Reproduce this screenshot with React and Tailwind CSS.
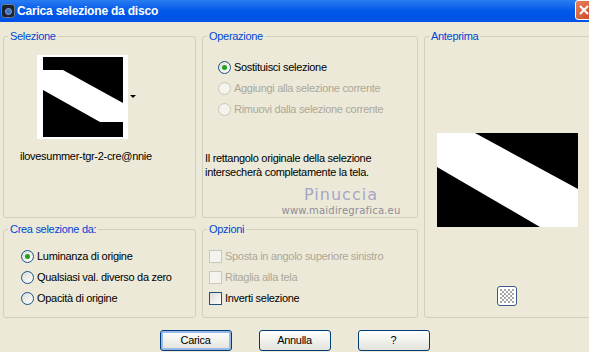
import React from "react";

const font = { fontFamily: '"Liberation Sans", Arial, sans-serif' };

function Radio({ checked, disabled, label }) {
  return (
    <div className="flex items-center h-[21px]">
      <span
        className={
          "w-[13px] h-[13px] rounded-full border flex items-center justify-center mr-[3px] " +
          (disabled
            ? "border-[#cac8bb] bg-[#f4f3ee]"
            : "border-[#1c5180] bg-gradient-to-br from-[#dcdcd7] to-white")
        }
      >
        {checked && <span className="w-[5px] h-[5px] rounded-full bg-[#21a121]" />}
      </span>
      <span className={disabled ? "text-[#aca899]" : "text-black"}>{label}</span>
    </div>
  );
}

function Check({ disabled, label }) {
  return (
    <div className="flex items-center h-[21px]">
      <span
        className={
          "w-[13px] h-[13px] border mr-[3px] " +
          (disabled
            ? "border-[#cac8bb] bg-[#f4f3ee]"
            : "border-[#1c5180] bg-gradient-to-br from-[#dcdcd7] to-white")
        }
      />
      <span className={disabled ? "text-[#aca899]" : "text-black"}>{label}</span>
    </div>
  );
}

function Group({ title, className, children }) {
  return (
    <fieldset className={"border border-[#d0d0bf] rounded-[3px] min-w-0 " + className}>
      <legend className="ml-[4px] px-[2px] text-[#0046d5] leading-[13px]">{title}</legend>
      {children}
    </fieldset>
  );
}

function Button({ children, primary }) {
  return (
    <button
      className={
        "w-[72px] h-[21px] rounded-[3px] border border-[#003c74] bg-gradient-to-b from-white to-[#e3e3db] text-black leading-none " +
        (primary ? "shadow-[inset_0_0_0_2px_#98b8ea]" : "")
      }
    >
      {children}
    </button>
  );
}

export default function App() {
  return (
    <div className="w-[589px] h-[352px] bg-[#ece9d8] overflow-hidden text-[11px] tracking-[-0.3px]" style={font}>
      {/* title bar */}
      <div className="h-[22px] flex items-center bg-gradient-to-b from-[#2a7cf2] via-[#0058e8] to-[#0052e4] relative">
        <div className="w-[14px] h-[14px] ml-[1px] rounded-[3px] bg-[#1c2433] border border-[#6c7a94] flex items-center justify-center">
          <span className="w-[7px] h-[7px] rounded-full bg-[#3b6fd0] border border-[#9ab]" />
        </div>
        <span className="ml-[2px] text-white font-bold text-[12px] tracking-[-0.2px]">Carica selezione da disco</span>
        <div className="absolute right-[-8px] top-0 w-[22px] h-[20px] rounded-[3px] border border-white bg-gradient-to-br from-[#e8805c] to-[#c8421e] flex items-center justify-start pl-[2px]">
          <svg width="12" height="12" viewBox="0 0 12 12">
            <path d="M2 2 L10 10 M10 2 L2 10" stroke="white" strokeWidth="2" />
          </svg>
        </div>
      </div>

      <div className="grid grid-cols-[193px_216px_1fr] grid-rows-[188px_95px] gap-x-[6px] gap-y-[5px] pl-[3px] pt-[8px] mr-[-4px]">
        <Group title="Selezione" className="">
          <div className="flex items-start pl-[33px] pt-[12px]">
            <div className="w-[91px] h-[84px] bg-white pl-[6px] pt-[2px]">
              <svg width="80" height="80" viewBox="0 0 80 80" className="block">
                <rect width="80" height="80" fill="black" />
                <polygon points="0,13 20,13 80,46 80,65 57,65 0,33" fill="white" />
              </svg>
            </div>
            <svg width="6" height="4" className="ml-[2px] mt-[40px]">
              <polygon points="0,0 6,0 3,3" fill="black" />
            </svg>
          </div>
          <div className="pl-[16px] mt-[9px]">ilovesummer-tgr-2-cre@nnie</div>
        </Group>

        <Group title="Operazione" className="">
          <div className="pl-[15px] pt-[14px]">
            <Radio checked label="Sostituisci selezione" />
            <Radio disabled label="Aggiungi alla selezione corrente" />
            <Radio disabled label="Rimuovi dalla selezione corrente" />
          </div>
          <div className="pl-[2px] mt-[31px] leading-[14px]">
            Il rettangolo originale della selezione
            <br />
            intersecherà completamente la tela.
          </div>
          <div className="flex flex-col items-center pl-[62px] mt-[7px]">
            <span className="text-[#a6a6c6] text-[16px] leading-[18px] tracking-[1px]" style={{ fontFamily: '"DejaVu Sans", sans-serif' }}>
              Pinuccia
            </span>
            <span className="text-[#8d8d96] text-[10px] leading-[13px] tracking-[0.2px]" style={{ fontFamily: '"DejaVu Sans", sans-serif' }}>
              www.maidiregrafica.eu
            </span>
          </div>
        </Group>

        <Group title="Anteprima" className="row-span-2 flex flex-col">
          <div className="flex flex-col items-center pl-[1px] pr-[4px]">
            <svg width="141" height="94" viewBox="0 0 141 94" className="block mt-[90px]">
              <rect width="141" height="94" fill="black" />
              <polygon points="0,0 38,0 141,56 141,94 103,94 0,34" fill="white" />
            </svg>
            <div className="mt-[59px] w-[20px] h-[20px] rounded-[3px] border border-[#3c5a87] bg-white flex items-center justify-center">
              <svg width="14" height="14" viewBox="0 0 14 14">
                {[0, 1, 2, 3, 4, 5, 6].map((r) =>
                  [0, 1, 2, 3, 4, 5, 6].map((c) =>
                    (r + c) % 2 === 0 ? <rect key={r + "-" + c} x={c * 2} y={r * 2} width="2" height="2" fill="#a8a8a8" /> : null
                  )
                )}
              </svg>
            </div>
          </div>
        </Group>

        <Group title="Crea selezione da:" className="">
          <div className="pl-[17px] pt-[10px]">
            <Radio checked label="Luminanza di origine" />
            <Radio label="Qualsiasi val. diverso da zero" />
            <Radio label="Opacità di origine" />
          </div>
        </Group>

        <Group title="Opzioni" className="">
          <div className="pl-[6px] pt-[10px]">
            <Check disabled label="Sposta in angolo superiore sinistro" />
            <Check disabled label="Ritaglia alla tela" />
            <Check label="Inverti selezione" />
          </div>
        </Group>
      </div>

      <div className="flex justify-center gap-[27px] mt-[12px]">
        <Button primary>Carica</Button>
        <Button>Annulla</Button>
        <Button>?</Button>
      </div>
    </div>
  );
}
